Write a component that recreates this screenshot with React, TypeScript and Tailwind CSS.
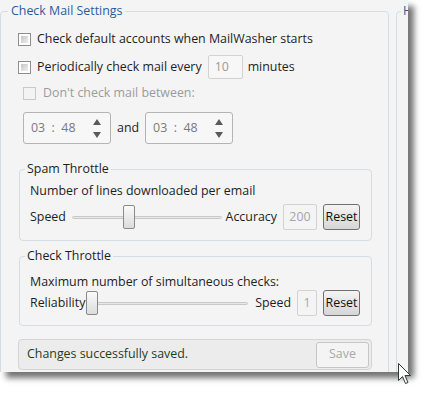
import React from 'react';

function CheckBox({ disabled }: { disabled?: boolean }) {
  if (disabled) {
    return <span className="block w-[13px] h-[13px] shrink-0 border border-[#c9c9c9] bg-[#f3f3f3]" />;
  }
  return (
    <span className="block w-[13px] h-[13px] shrink-0 border border-[#8e8f8f] bg-white p-[2px]">
      <span className="block w-full h-full bg-gradient-to-br from-[#c6c6c6] to-[#eeeeee]" />
    </span>
  );
}

function Spinner() {
  return (
    <div className="w-[88px] h-[32px] border border-[#b4b4b4] rounded-[3px] bg-[#f7f7f7] flex items-center pl-[7px] pr-[9px] text-[#7a7a7a]">
      <span className="flex-1">03 &nbsp;: &nbsp;48</span>
      <div className="flex flex-col gap-[7px]">
        <svg width="8" height="6" viewBox="0 0 8 6"><path d="M4 0 L8 6 L0 6 Z" fill="#5a5a5a" /></svg>
        <svg width="8" height="6" viewBox="0 0 8 6"><path d="M0 0 L8 0 L4 6 Z" fill="#5a5a5a" /></svg>
      </div>
    </div>
  );
}

function Thumb() {
  return <span className="block w-[12px] h-[24px] rounded-[2px] border border-[#8a8a8a] bg-gradient-to-b from-[#fafafa] to-[#dcdcdc]" />;
}

function ResetButton() {
  return (
    <button className="w-[37px] h-[26px] rounded-[3px] border border-[#707070] bg-gradient-to-b from-[#f4f4f4] to-[#d6d6d6] text-[#111] leading-none shrink-0">
      Reset
    </button>
  );
}

export default function App() {
  return (
    <div className="relative w-[429px] h-[397px] bg-white font-['Segoe_UI','Open_Sans',sans-serif] text-[12.4px] text-[#1e1e1e] overflow-hidden">
      <div className="w-[408px] h-[372px] bg-[#f4f4f4] shadow-[6px_6px_6px_rgba(0,0,0,0.55)] overflow-hidden flex pt-[3px]">
        {/* Check Mail Settings */}
        <fieldset className="w-[389px] h-[420px] shrink-0 border border-[#d6dde2] rounded-[4px]">
          <legend className="ml-[7px] px-[3px] leading-[16px] text-[#2b5c9e]">Check Mail Settings</legend>
          <div className="pl-[17px] pr-[16px] flex flex-col">
            <label className="mt-[12px] h-4 flex items-center gap-[6px]">
              <CheckBox />
              <span>Check default accounts when MailWasher starts</span>
            </label>
            <div className="mt-[8px] h-[24px] flex items-center">
              <CheckBox />
              <span className="ml-[6px]">Periodically check mail every</span>
              <span className="ml-[6px] w-[35px] h-[24px] border border-[#d2d2d2] rounded-[2px] bg-[#f7f7f7] text-[#9a9a9a] flex items-center pl-[6px]">10</span>
              <span className="ml-[5px]">minutes</span>
            </div>
            <label className="mt-[6px] h-4 pl-[5px] flex items-center gap-[7px] text-[#9b9b9b]">
              <CheckBox disabled />
              <span>Don't check mail between:</span>
            </label>
            <div className="mt-[11px] pl-[5px] flex items-center">
              <Spinner />
              <span className="mx-[6px]">and</span>
              <Spinner />
            </div>

            {/* Spam Throttle */}
            <fieldset className="mt-[17px] ml-px border border-[#d6dde2] rounded-[4px] pl-[10px] pr-[11px] pb-[10px]">
              <legend className="ml-[-5px] px-[2px] leading-[16px]">Spam Throttle</legend>
              <div className="mt-[6px] h-4 flex items-center">Number of lines downloaded per email</div>
              <div className="mt-[5px] h-[26px] flex items-center">
                <span>Speed</span>
                <div className="relative flex-1 ml-[6px] mr-[4px] h-[3px] border border-[#c8c8c8] bg-[#e8e8e8] rounded-full">
                  <span className="absolute left-[50px] top-[-12px]"><Thumb /></span>
                </div>
                <span>Accuracy</span>
                <span className="ml-[6px] w-[34px] h-[26px] border border-[#d2d2d2] rounded-[2px] text-[#a5a5a5] flex items-center justify-center">200</span>
                <span className="ml-[6px]"><ResetButton /></span>
              </div>
            </fieldset>

            {/* Check Throttle */}
            <fieldset className="mt-[7px] ml-px border border-[#d6dde2] rounded-[4px] pl-[10px] pr-[11px] pb-[9px]">
              <legend className="ml-[-5px] px-[2px] leading-[16px]">Check Throttle</legend>
              <div className="mt-[10px] h-4 flex items-center">Maximum number of simultaneous checks:</div>
              <div className="h-[26px] flex items-center">
                <span>Reliability</span>
                <div className="relative flex-1 ml-px mr-[7px] h-[3px] border border-[#c8c8c8] bg-[#e8e8e8] rounded-full">
                  <span className="absolute left-[-1px] top-[-12px]"><Thumb /></span>
                </div>
                <span>Speed</span>
                <span className="ml-[6px] w-[20px] h-[26px] border border-[#d2d2d2] rounded-[2px] text-[#a5a5a5] flex items-center justify-center">1</span>
                <span className="ml-[6px]"><ResetButton /></span>
              </div>
            </fieldset>

            {/* status bar */}
            <div className="mt-[13px] h-[31px] border border-[#d4d4d4] rounded-[4px] bg-[#ececec] flex items-center pl-[8px] pr-[2px]">
              <span className="flex-1 text-[#1d3d1d]">Changes successfully saved.</span>
              <button className="w-[53px] h-[26px] rounded-[3px] border border-[#c6c6c6] bg-[#f4f4f4] text-[#a8a8a8]">Save</button>
            </div>
          </div>
        </fieldset>

        {/* second group, cut off by the window edge */}
        <fieldset className="ml-[7px] w-[120px] h-[420px] shrink-0 border border-[#d6dde2] rounded-[4px]">
          <legend className="ml-[4px] px-[2px] leading-[16px] text-[#2b5c9e]">H</legend>
        </fieldset>
      </div>

      {/* mouse cursor */}
      <svg className="absolute left-[397px] top-[362px]" width="16" height="24" viewBox="0 0 16 24">
        <path d="M1.5 1.5 L1.5 18.5 L5.5 14.5 L8.5 21.5 L11 20.5 L8 13.5 L13.5 13.5 Z" fill="#fff" stroke="#2f3a3a" strokeWidth="1" strokeLinejoin="round" />
      </svg>
    </div>
  );
}
